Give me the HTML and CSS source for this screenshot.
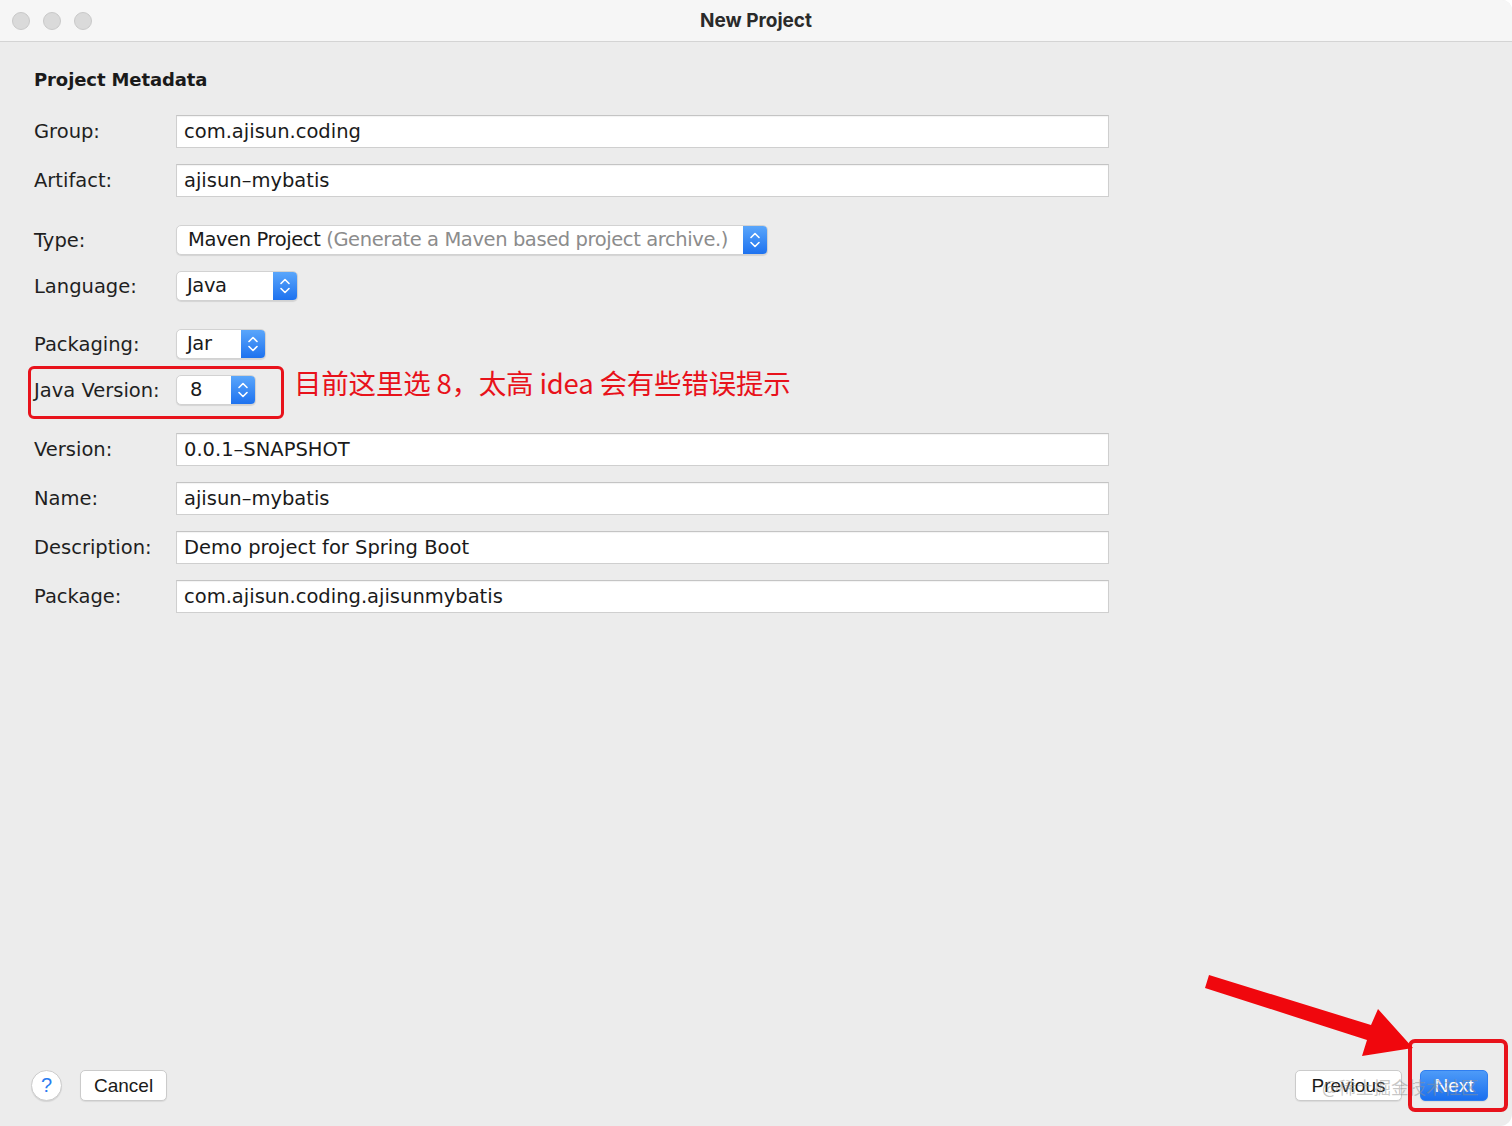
FILE: index.html
```html
<!DOCTYPE html>
<html lang="zh-CN">
<head>
<meta charset="UTF-8" />
<meta name="viewport" content="width=device-width, initial-scale=1" />
<title>New Project</title>
<link rel="stylesheet" href="styles.css">
</head>
<body>

<div class="janela">
  <div class="barra-titulo">
    <div class="luzes">
      <span class="luz"></span>
      <span class="luz"></span>
      <span class="luz"></span>
    </div>
    <div class="titulo">New Project</div>
  </div>

  <div class="conteudo">
    <h1 class="secao">Project Metadata</h1>

    <div class="linha">
      <label>Group:</label>
      <div class="campo">com.ajisun.coding</div>
    </div>
    <div class="linha">
      <label>Artifact:</label>
      <div class="campo">ajisun–mybatis</div>
    </div>

    <div class="linha sep">
      <label>Type:</label>
      <div class="seletor largo">
        <span class="valor">Maven Project <em>(Generate a Maven based project archive.)</em></span>
        <span class="setas"><svg width="12" height="22" viewBox="0 0 12 22"><path d="M2 8.5 L6 4.5 L10 8.5 M2 13.5 L6 17.5 L10 13.5" /></svg></span>
      </div>
    </div>
    <div class="linha">
      <label>Language:</label>
      <div class="seletor medio">
        <span class="valor">Java</span>
        <span class="setas"><svg width="12" height="22" viewBox="0 0 12 22"><path d="M2 8.5 L6 4.5 L10 8.5 M2 13.5 L6 17.5 L10 13.5" /></svg></span>
      </div>
    </div>

    <div class="linha sep">
      <label>Packaging:</label>
      <div class="seletor curto">
        <span class="valor">Jar</span>
        <span class="setas"><svg width="12" height="22" viewBox="0 0 12 22"><path d="M2 8.5 L6 4.5 L10 8.5 M2 13.5 L6 17.5 L10 13.5" /></svg></span>
      </div>
    </div>
    <div class="linha marcada">
      <label>Java Version:</label>
      <div class="seletor mini">
        <span class="valor num">8</span>
        <span class="setas"><svg width="12" height="22" viewBox="0 0 12 22"><path d="M2 8.5 L6 4.5 L10 8.5 M2 13.5 L6 17.5 L10 13.5" /></svg></span>
      </div>
      <!-- anotação em vermelho sobre o print -->
      <div class="nota">目前这里选 8，太高 idea 会有些错误提示</div>
    </div>

    <div class="linha sep">
      <label>Version:</label>
      <div class="campo">0.0.1–SNAPSHOT</div>
    </div>
    <div class="linha">
      <label>Name:</label>
      <div class="campo">ajisun–mybatis</div>
    </div>
    <div class="linha">
      <label>Description:</label>
      <div class="campo">Demo project for Spring Boot</div>
    </div>
    <div class="linha">
      <label>Package:</label>
      <div class="campo">com.ajisun.coding.ajisunmybatis</div>
    </div>
  </div>

  <div class="rodape">
    <div class="esquerda">
      <button class="ajuda">?</button>
      <button class="botao">Cancel</button>
    </div>
    <div class="direita">
      <button class="botao">Previous</button>
      <button class="botao primario">Next</button>
    </div>
  </div>

  <div class="marca-dagua">@稀土掘金技术社区</div>
  <div class="caixa-next"></div>
  <svg class="seta" width="1512" height="1126" viewBox="0 0 1512 1126">
    <polygon points="1209,975 1371,1025 1378,1009 1413,1048 1362,1056 1367,1040 1205,988" />
  </svg>
</div>

</body>
</html>
```

FILE: styles.css
```css
* {
  box-sizing: border-box;
}
html, body {
  margin: 0;
  background: #fff;
}
body {
  font-family: 'DejaVu Sans', 'Noto Sans CJK SC', sans-serif;
  color: #1c1c1c;
}
.janela {
  position: relative;
  width: 1512px;
  height: 1126px;
  background: #ececec;
  border-radius: 0 10px 12px 0;
  overflow: hidden;
  display: flex;
  flex-direction: column;
}

/* Barra de título estilo macOS */
.barra-titulo {
  height: 42px;
  flex: none;
  background: #f6f6f6;
  border-bottom: 1px solid #d4d4d4;
  display: flex;
  align-items: center;
  justify-content: center;
  position: relative;
}
.luzes {
  position: absolute;
  left: 12px;
  top: 12px;
  display: flex;
  gap: 13px;
}
.luz {
  width: 18px;
  height: 18px;
  border-radius: 50%;
  background: #dadada;
  border: 1px solid #c9c9c9;
}
.titulo {
  font-family: Inter, 'Open Sans', sans-serif;
  font-weight: 700;
  font-size: 19px;
  color: #2a2a2a;
  margin-top: -1px;
}

/* Formulário */
.conteudo {
  flex: 1;
  padding: 26px 0 0 34px;
}
.secao {
  margin: 0 0 23px;
  font-size: 18px;
  line-height: 24px;
  font-weight: 700;
  letter-spacing: -0.1px;
  color: #1a1a1a;
}
.linha {
  display: grid;
  grid-template-columns: 142px auto;
  align-items: center;
  margin-top: 16px;
  position: relative;
}
.linha:first-of-type {
  margin-top: 0;
}
.linha.sep {
  margin-top: 28px;
}
label {
  font-size: 19.5px;
  color: #1f1f1f;
}
.campo {
  width: 933px;
  height: 33px;
  background: #fff;
  border: 1px solid #cfcfcf;
  border-top-color: #c4c4c4;
  box-shadow: inset 0 1px 1px #0000000d;
  padding: 0 7px;
  font-size: 19.5px;
  line-height: 31px;
  color: #1a1a1a;
  white-space: nowrap;
}

/* Seletores com as setinhas azuis */
.seletor {
  height: 30px;
  display: flex;
  background: #fff;
  border: 1px solid #d2d2d2;
  border-radius: 5px;
  box-shadow: 0 1px 1px #0000001a;
  overflow: hidden;
}
.seletor .valor {
  flex: 1;
  padding-left: 11px;
  font-size: 19.5px;
  line-height: 28px;
  color: #1a1a1a;
  white-space: nowrap;
  letter-spacing: -0.4px;
}
.seletor .valor.num {
  padding-left: 13px;
}
.seletor em {
  font-style: normal;
  color: #8c8c8c;
}
.setas {
  width: 24px;
  flex: none;
  background: linear-gradient(#5aa6fb, #1e72ef);
  display: flex;
  align-items: center;
  justify-content: center;
}
.setas path {
  fill: none;
  stroke: #fff;
  stroke-width: 1.6;
  stroke-linecap: round;
  stroke-linejoin: round;
}
.largo { width: 592px; }
.medio { width: 122px; }
.medio .valor { padding-left: 10px; }
.curto { width: 90px; }
.curto .valor { padding-left: 10px; }
.mini { width: 80px; }

/* Anotações vermelhas */
.marcada::before {
  content: '';
  position: absolute;
  left: -6px;
  top: -9px;
  width: 250px;
  height: 47px;
  border: 3px solid #e8121b;
  border-radius: 6px;
}
.nota {
  position: absolute;
  left: 260px;
  top: -13px;
  font-family: 'Noto Sans CJK SC', sans-serif;
  font-size: 27.5px;
  letter-spacing: -0.2px;
  color: #e8121b;
  white-space: nowrap;
}
.caixa-next {
  position: absolute;
  left: 1408px;
  top: 1039px;
  width: 100px;
  height: 73px;
  border: 4px solid #e8121b;
  border-radius: 7px;
}
.seta {
  position: absolute;
  left: 0;
  top: 0;
  pointer-events: none;
}
.seta polygon {
  fill: #f0070d;
}

/* Rodapé */
.rodape {
  flex: none;
  display: flex;
  justify-content: space-between;
  align-items: center;
  padding: 0 24px 25px 31px;
}
.esquerda, .direita {
  display: flex;
  align-items: center;
}
.esquerda { gap: 18px; }
.direita { gap: 18px; }
button {
  font-family: 'Liberation Sans', Arial, sans-serif;
  cursor: pointer;
}
.ajuda {
  width: 31px;
  height: 31px;
  border-radius: 50%;
  border: 1px solid #cdcdcd;
  background: #fff;
  color: #2a7cf0;
  font-size: 20px;
  padding: 0;
  box-shadow: 0 1px 1px #0000001a;
}
.botao {
  height: 31px;
  padding: 0 13px;
  background: #fff;
  border: 1px solid #cbcbcb;
  border-radius: 5px;
  font-size: 19px;
  color: #1a1a1a;
  box-shadow: 0 1px 1px #00000014;
}
.direita .botao {
  min-width: 107px;
}
.direita .botao.primario {
  min-width: 68px;
  color: #fff;
  border-color: #2f7ef0;
  background: linear-gradient(#4d9bf8, #1b6fee);
}
.marca-dagua {
  position: absolute;
  left: 1322px;
  top: 1074px;
  font-family: 'Noto Sans CJK SC', sans-serif;
  font-size: 17.5px;
  color: #8f8f8f80;
  pointer-events: none;
}
```
